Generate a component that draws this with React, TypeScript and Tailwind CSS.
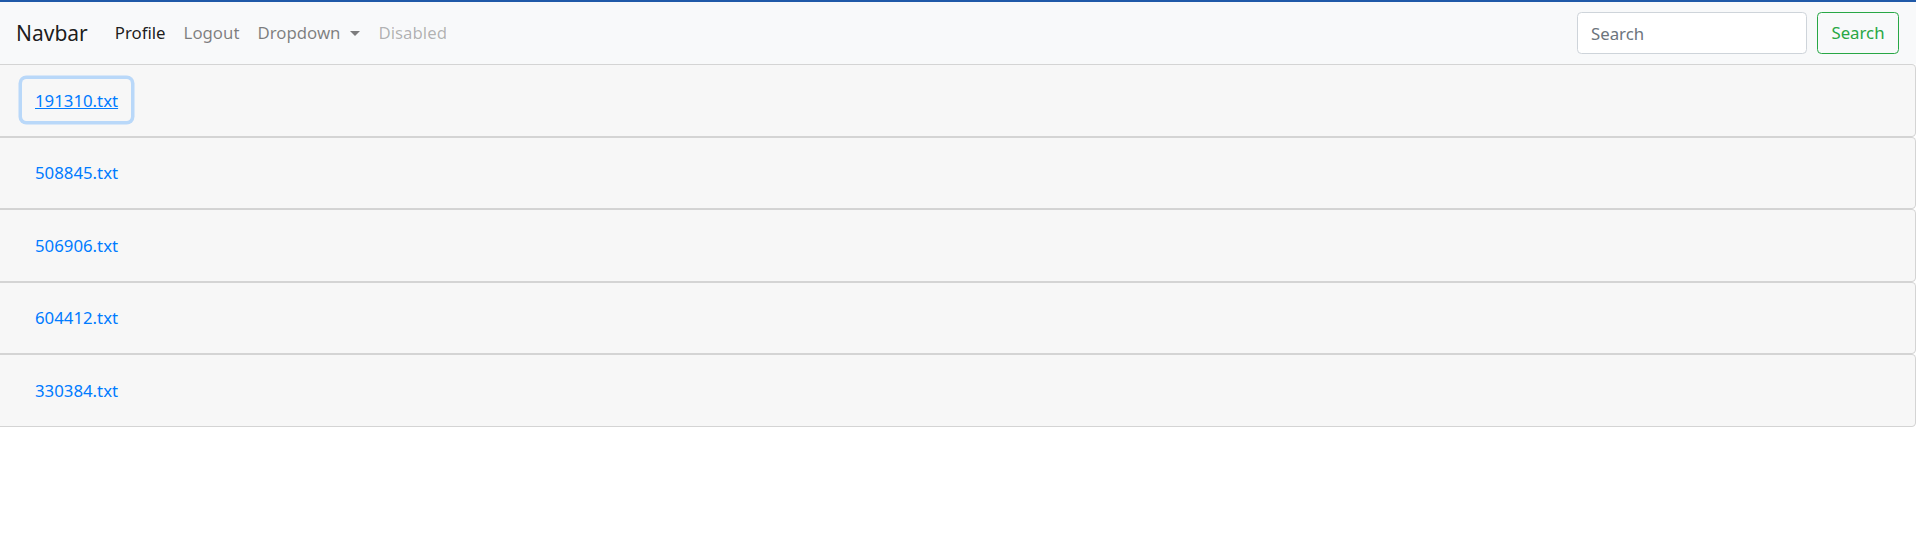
const files = ['191310.txt', '508845.txt', '506906.txt', '604412.txt', '330384.txt'];

export default function App() {
  return (
    <div className="min-h-[537px] bg-white font-['Noto_Sans',sans-serif] text-[16.8px]">
      <nav className="h-[64px] border-t-2 border-[#2059a8] bg-[#f8f9fa] flex items-center pl-4 pr-[17px]">
        <a href="#" className="text-[21px] text-[rgba(0,0,0,0.9)] mr-[18px] leading-none">Navbar</a>
        <ul className="flex items-center">
          <li><a href="#" className="px-[9px] text-[rgba(0,0,0,0.9)]">Profile</a></li>
          <li><a href="#" className="px-[9px] text-[rgba(0,0,0,0.5)]">Logout</a></li>
          <li>
            <a href="#" className="px-[9px] text-[rgba(0,0,0,0.5)] inline-flex items-center gap-[10px]">
              Dropdown
              <span className="inline-block w-0 h-0 border-l-[5px] border-r-[5px] border-t-[5px] border-l-transparent border-r-transparent border-t-[rgba(0,0,0,0.5)]" />
            </a>
          </li>
          <li><span className="px-[9px] text-[rgba(0,0,0,0.3)]">Disabled</span></li>
        </ul>
        <form className="ml-auto flex items-center gap-[10px]" onSubmit={e => e.preventDefault()}>
          <input
            placeholder="Search"
            className="w-[230px] h-[42px] px-[13px] bg-white border border-[#ced4da] rounded-[4.4px] text-[#495057] placeholder:text-[#6c757d] outline-none"
          />
          <button className="h-[42px] w-[82px] border border-[#28a745] rounded-[4.4px] text-[#28a745]">Search</button>
        </form>
      </nav>
      <div>
        {files.map((f, i) => (
          <div key={f} className="h-[72.6px] border border-l-0 border-[rgba(0,0,0,0.14)] rounded-r-[4.4px] bg-[#f7f7f7] flex items-center pl-[22px]">
            <a
              href="#"
              className={`h-[42px] px-[13px] flex items-center rounded-[4.4px] text-[#007bff] ${i === 0 ? 'underline shadow-[0_0_0_3.5px_rgba(0,123,255,0.25)]' : ''}`}
            >
              {f}
            </a>
          </div>
        ))}
      </div>
    </div>
  );
}
